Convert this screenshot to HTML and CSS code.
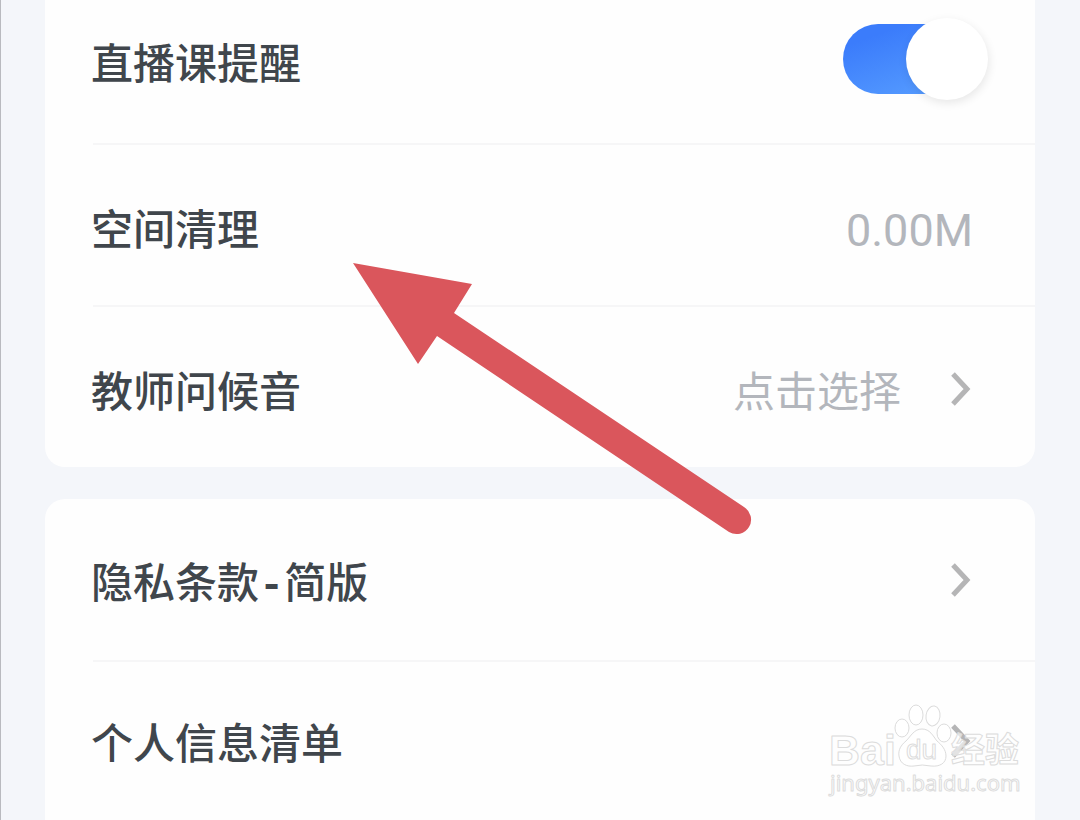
FILE: index.html
```
<!DOCTYPE html>
<html lang="zh-CN">
<head>
<meta charset="utf-8">
<meta name="viewport" content="width=device-width, initial-scale=1">
<title>设置</title>
<link rel="stylesheet" href="styles.css">
</head>
<body>
<main class="settings">
  <section class="card card-first">
    <div class="row row-switch">
      <label class="label" for="live">直播课提醒</label>
      <input class="switch" type="checkbox" role="switch" id="live" checked>
    </div>
    <button class="row" type="button">
      <span class="label">空间清理</span>
      <span class="value value-size">0.00M</span>
    </button>
    <button class="row" type="button">
      <span class="label">教师问候音</span>
      <span class="value">点击选择</span>
      <svg class="chevron" viewBox="0 0 24 36" aria-hidden="true"><path d="M4 3 18 18 4 33"/></svg>
    </button>
  </section>
  <section class="card card-links">
    <a class="row" href="#privacy">
      <span class="label">隐私条款<span class="dash">-</span>简版</span>
      <svg class="chevron" viewBox="0 0 24 36" aria-hidden="true"><path d="M4 3 18 18 4 33"/></svg>
    </a>
    <a class="row" href="#info">
      <span class="label">个人信息清单</span>
      <svg class="chevron" viewBox="0 0 24 36" aria-hidden="true"><path d="M4 3 18 18 4 33"/></svg>
    </a>
  </section>
</main>
<svg class="pointer" viewBox="0 0 400 274" aria-hidden="true">
  <path d="M1 0 120 21 102 50 392 244A14 14 0 0 1 377 269L85 73 66 101Z"/>
</svg>
<svg class="watermark" viewBox="0 0 200 100" role="img" aria-label="Baidu 经验">
  <text class="mark-latin" x="3" y="65">Bai</text>
  <g class="mark-paw">
    <path d="M96 29C88 29 85 36 80 41C75 45 72 50 73 56C74 64 81 67 88 66Q96 64 105 66C114 67 120 63 120 56C120 50 116 45 111 41C107 36 104 29 96 29Z"/>
    <ellipse cx="76" cy="28" rx="7" ry="9"/>
    <ellipse cx="90" cy="15" rx="7" ry="10"/>
    <ellipse cx="107" cy="16" rx="7" ry="10" transform="rotate(8 107 16)"/>
    <ellipse cx="118" cy="33" rx="7" ry="9"/>
  </g>
  <text class="mark-du" x="80" y="59">du</text>
  <text class="mark-cjk" x="125" y="62">经验</text>
  <text class="mark-url" x="4" y="91">jingyan.baidu.com</text>
</svg>
</body>
</html>
```
FILE: styles.css
```
* {
  box-sizing: border-box;
}

body {
  position: relative;
  margin: 0;
  height: 100vh;
  overflow: hidden;
  border-left: 1px solid #b9babf;
  background: #f4f6fa;
  color: #40464c;
  font-family: Roboto, "Noto Sans CJK SC", sans-serif;
}

.settings {
  display: flex;
  flex-direction: column;
  gap: 32px;
  padding: 0 45px 0 44px;
}

.card {
  border-radius: 20px;
  background: #fefefe;
}

.card-first {
  border-radius: 0 0 20px 20px;
}

.card-links {
  padding-bottom: 24px;
}

.row {
  position: relative;
  display: flex;
  align-items: center;
  width: 100%;
  min-height: 162px;
  padding: 6px 62px 0 46px;
  border: 0;
  background: none;
  color: inherit;
  font: inherit;
  text-align: left;
  text-decoration: none;
}

.card-links .row {
  min-height: 161px;
  padding-top: 0;
}

.row + .row::before {
  content: "";
  position: absolute;
  top: 0;
  right: 0;
  left: 48px;
  height: 2px;
  background: #f6f6f7;
}

.card .row-switch {
  min-height: 143px;
  padding: 0 47px 26px 46px;
}

.label {
  flex: 1;
  padding-top: 8px;
  font-size: 42px;
  font-weight: 500;
  line-height: 60px;
}

.row-switch .label {
  padding-top: 12px;
}

.dash {
  font-family: "Liberation Mono", monospace;
  font-weight: bold;
  line-height: 1;
}

.value {
  padding-top: 8px;
  color: #b3b6bc;
  font-size: 42px;
  line-height: 60px;
}

.value-size {
  font-size: 45px;
}

.chevron {
  width: 24px;
  height: 36px;
  margin-left: 48px;
  fill: none;
  stroke: #b5b5b6;
  stroke-width: 5;
}

.switch {
  position: relative;
  appearance: none;
  width: 145px;
  height: 70px;
  margin: 0;
  background: linear-gradient(160deg, #3b7cfb 20%, #559bff 90%) left / 120px 70px no-repeat;
  border-radius: 35px;
}

.switch::after {
  content: "";
  position: absolute;
  top: -6px;
  right: 0;
  width: 82px;
  height: 82px;
  border-radius: 50%;
  background: #fff;
  box-shadow: 1px 3px 10px #00000018;
}

.pointer {
  position: absolute;
  top: 263px;
  left: 351px;
  width: 400px;
  fill: #da565c;
  pointer-events: none;
}

.watermark {
  position: absolute;
  top: 700px;
  right: 54px;
  width: 200px;
  fill: #ffffffa0;
  stroke: #dcdcdc;
  stroke-width: 1;
  stroke-linejoin: round;
  pointer-events: none;
}

.mark-latin {
  font: bold 43px "Liberation Sans", sans-serif;
}

.mark-du {
  font: 28px "Liberation Sans", sans-serif;
}

.mark-cjk {
  font: bold 34px "Noto Sans CJK SC", sans-serif;
}

.mark-url {
  font: 22px "Noto Sans", sans-serif;
}
```
